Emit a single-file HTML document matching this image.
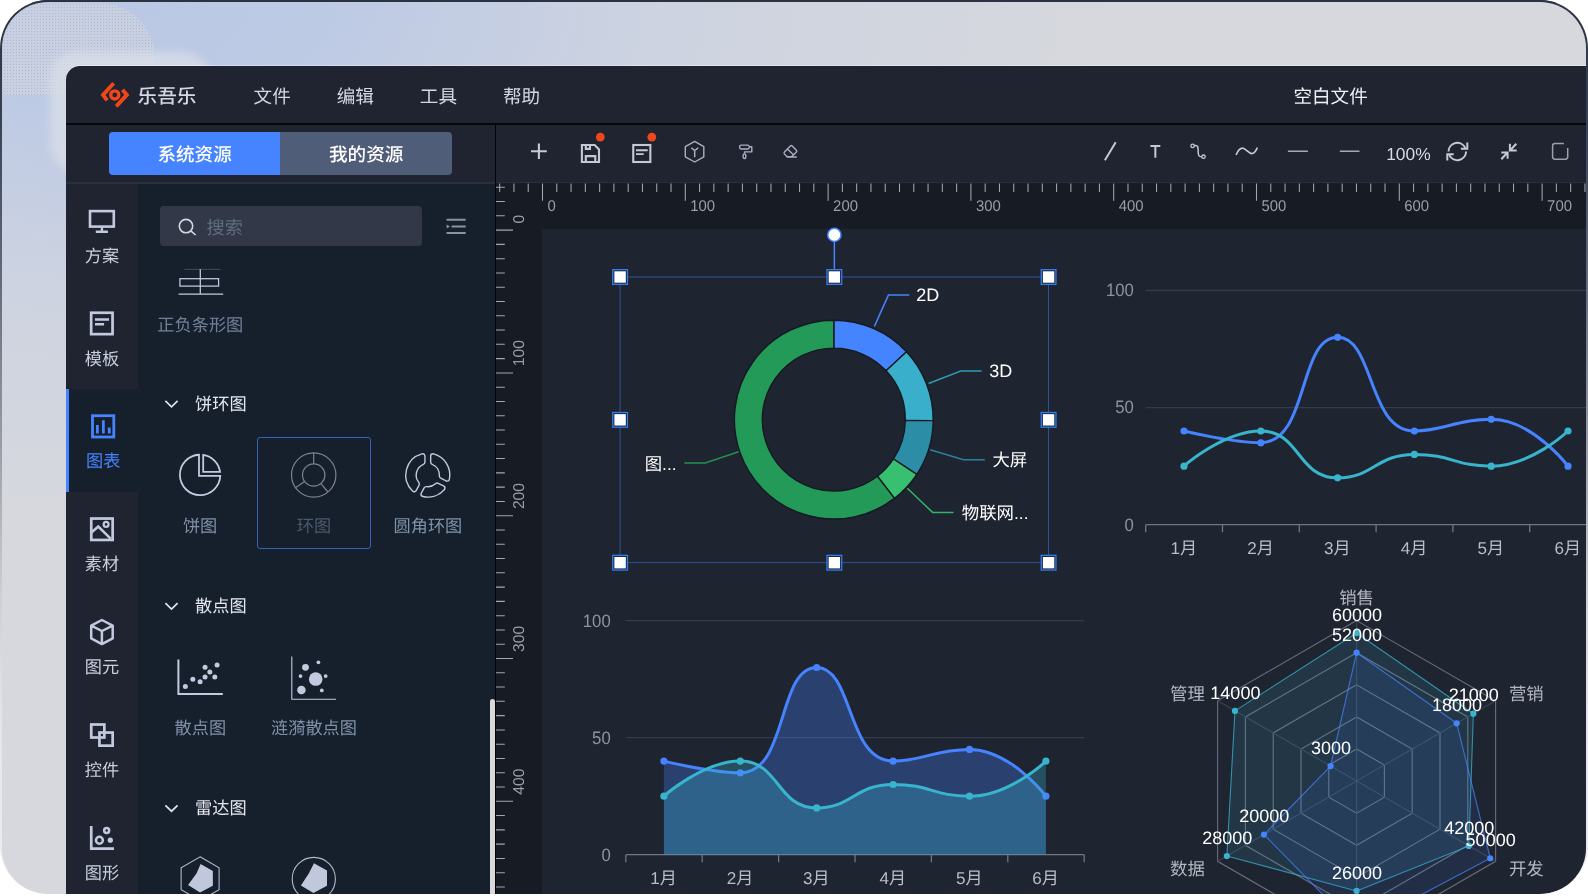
<!DOCTYPE html>
<html lang="zh-CN"><head><meta charset="utf-8"><title>乐吾乐 - 空白文件</title>
<style>
html,body{margin:0;padding:0;}
body{width:1588px;height:896px;overflow:hidden;background:#fff;font-family:"Liberation Sans","Noto Sans CJK SC",sans-serif;text-rendering:geometricPrecision;}
svg text{text-rendering:geometricPrecision;}
#edge{position:absolute;left:0;top:0;width:1588px;height:894px;border-radius:48px;overflow:hidden;
 background:linear-gradient(180deg,#2b3242 0px,#3a4152 120px,#6b7080 300px,#9a9eaa 450px,#cdd0d7 600px,#e4e5e9 720px,#ededef 894px);}
#edge:before{content:"";position:absolute;left:0;top:0;right:0;height:3px;background:#2b3242;}
#frame{position:absolute;left:2px;top:2px;width:1584px;height:892px;border-radius:46px 46px 46px 46px;overflow:hidden;
 background:
  radial-gradient(ellipse 980px 520px at 120px 0px,rgba(186,200,229,1) 0%,rgba(187,201,229,.9) 22%,rgba(196,206,228,.5) 55%,rgba(214,216,221,0) 100%),
  #d6d8dd;}
#in{position:absolute;left:-2px;top:-2px;width:1588px;height:896px;will-change:transform;}
.halft{position:absolute;background-image:radial-gradient(circle,rgba(150,150,150,.55) 0.6px,rgba(150,150,150,0) 0.9px);background-size:3px 3px;}
.b{position:absolute;}
.t{position:absolute;white-space:nowrap;}
svg{position:absolute;left:0;top:0;}
</style></head>
<body>
<div id="edge"><div id="frame"><div id="in">
<div class="b" style="left:3px;top:3px;width:152px;height:92px;border-radius:44px 70px 46px 0;background:rgba(216,218,224,.42);"></div>
<div class="halft" style="left:3px;top:3px;width:152px;height:92px;border-radius:44px 70px 46px 0;opacity:.75"></div>
<div class="b" style="left:50px;top:52px;width:168px;height:124px;border-radius:26px 40px 0 34px;background:rgba(220,223,232,.7);filter:blur(4px);"></div>
<div class="b" style="left:66px;top:66px;width:1530px;height:840px;background:#1f2430;border-top-left-radius:14px;box-shadow:0 -1px 0 rgba(255,255,255,.35);"></div>
<div class="b" style="left:66px;top:123px;width:1530px;height:2px;background:#05070b;"></div>
<div class="b" style="left:66px;top:183.6px;width:71.6px;height:720px;background:#1f2430;"></div>
<div class="b" style="left:137.6px;top:183.6px;width:357.4px;height:720px;background:#161f2c;"></div>
<div class="b" style="left:66px;top:388.5px;width:71.6px;height:103.6px;background:#161f2c;"></div>
<div class="b" style="left:66px;top:388.5px;width:3px;height:103.6px;background:#4583ff;"></div>
<div class="b" style="left:66px;top:182px;width:429px;height:1.8px;background:#2a303d;"></div>
<div class="b" style="left:496px;top:182px;width:1100px;height:1.5px;background:#2a303d;"></div>
<div class="b" style="left:496px;top:183px;width:1100px;height:720px;background:#171b24;"></div>
<div class="b" style="left:542px;top:229px;width:1060px;height:680px;background:#1f2431;"></div>
<div class="b" style="left:494.6px;top:125px;width:1.5px;height:780px;background:#020305;"></div>
<div class="b" style="left:490.2px;top:699px;width:4.4px;height:210px;background:#d9d9db;border-radius:2.5px;"></div>
<div class="t" style="top:83.5px;height:27px;line-height:27px;font-size:19.6px;color:#d3d8e6;font-weight:500;left:137.6px;">乐吾乐</div>
<div class="t" style="top:83.7px;height:26px;line-height:26px;font-size:18.6px;color:#d3d8e4;left:253.6px;">文件</div>
<div class="t" style="top:83.7px;height:26px;line-height:26px;font-size:18.6px;color:#d3d8e4;left:336.7px;">编辑</div>
<div class="t" style="top:83.7px;height:26px;line-height:26px;font-size:18.6px;color:#d3d8e4;left:419.8px;">工具</div>
<div class="t" style="top:83.7px;height:26px;line-height:26px;font-size:18.6px;color:#d3d8e4;left:502.9px;">帮助</div>
<div class="t" style="top:83.7px;height:26px;line-height:26px;font-size:18.6px;color:#eef0f6;left:1293.4px;">空白文件</div>
<div class="b" style="left:108.8px;top:132px;width:171.6px;height:43px;background:#4583ff;border-radius:4px 0 0 4px;"></div>
<div class="b" style="left:280.4px;top:132px;width:171.6px;height:43px;background:#505d79;border-radius:0 4px 4px 0;"></div>
<div class="t" style="top:142.2px;height:26px;line-height:26px;font-size:18.6px;color:#ffffff;font-weight:500;left:194.6px;width:300px;margin-left:-150px;text-align:center;">系统资源</div>
<div class="t" style="top:142.2px;height:26px;line-height:26px;font-size:18.6px;color:#ffffff;font-weight:500;left:366.2px;width:300px;margin-left:-150px;text-align:center;">我的资源</div>
<div class="t" style="top:243.6px;height:24px;line-height:24px;font-size:17.2px;color:#c9cfdf;left:101.9px;width:300px;margin-left:-150px;text-align:center;">方案</div>
<div class="t" style="top:346.5px;height:24px;line-height:24px;font-size:17.2px;color:#c9cfdf;left:101.9px;width:300px;margin-left:-150px;text-align:center;">模板</div>
<div class="t" style="top:449.4px;height:24px;line-height:24px;font-size:17.2px;color:#4583ff;left:103.2px;width:300px;margin-left:-150px;text-align:center;">图表</div>
<div class="t" style="top:552.3px;height:24px;line-height:24px;font-size:17.2px;color:#c9cfdf;left:101.9px;width:300px;margin-left:-150px;text-align:center;">素材</div>
<div class="t" style="top:655.2px;height:24px;line-height:24px;font-size:17.2px;color:#c9cfdf;left:101.9px;width:300px;margin-left:-150px;text-align:center;">图元</div>
<div class="t" style="top:758.1px;height:24px;line-height:24px;font-size:17.2px;color:#c9cfdf;left:101.9px;width:300px;margin-left:-150px;text-align:center;">控件</div>
<div class="t" style="top:861px;height:24px;line-height:24px;font-size:17.2px;color:#c9cfdf;left:101.9px;width:300px;margin-left:-150px;text-align:center;">图形</div>
<div class="b" style="left:160.4px;top:206.4px;width:261.5px;height:39.6px;background:#323847;border-radius:4px;"></div>
<div class="t" style="top:215.9px;height:25px;line-height:25px;font-size:18.2px;color:#5f6c80;left:206.5px;">搜索</div>
<div class="t" style="top:312.6px;height:24px;line-height:24px;font-size:17.2px;color:#6f8198;left:200.3px;width:300px;margin-left:-150px;text-align:center;">正负条形图</div>
<div class="t" style="top:392px;height:24px;line-height:24px;font-size:17.2px;color:#e2e6ee;left:195px;">饼环图</div>
<div class="t" style="top:594.2px;height:24px;line-height:24px;font-size:17.2px;color:#e2e6ee;left:195px;">散点图</div>
<div class="t" style="top:796.4px;height:24px;line-height:24px;font-size:17.2px;color:#e2e6ee;left:195px;">雷达图</div>
<div class="t" style="top:514px;height:24px;line-height:24px;font-size:17.2px;color:#7f91a8;left:200.1px;width:300px;margin-left:-150px;text-align:center;">饼图</div>
<div class="t" style="top:514px;height:24px;line-height:24px;font-size:17.2px;color:#4b596c;left:313.9px;width:300px;margin-left:-150px;text-align:center;">环图</div>
<div class="t" style="top:514px;height:24px;line-height:24px;font-size:17.2px;color:#7f91a8;left:427.9px;width:300px;margin-left:-150px;text-align:center;">圆角环图</div>
<div class="t" style="top:716.4px;height:24px;line-height:24px;font-size:17.2px;color:#7f91a8;left:200.3px;width:300px;margin-left:-150px;text-align:center;">散点图</div>
<div class="t" style="top:716.4px;height:24px;line-height:24px;font-size:17.2px;color:#7f91a8;left:314px;width:300px;margin-left:-150px;text-align:center;">涟漪散点图</div>
<div class="b" style="left:257.2px;top:436.7px;width:113.8px;height:112.6px;box-sizing:border-box;border:1.3px solid #3862b4;border-radius:3px;"></div>
<div class="t" style="top:141.6px;height:24px;line-height:24px;font-size:17.4px;color:#d6dae4;left:1386.2px;">100%</div>
<svg width="1588" height="896" viewBox="0 0 1588 896">
<g fill="none" stroke="#f0471a" stroke-width="3.9" stroke-linejoin="miter"><path d="M113.66 83.2 L103.06 94.9 L107.1 100.4"/><path d="M122.57 89.8 L126.81 94.9 L116.2 106.35"/><circle cx="114.75" cy="94.9" r="4.05" stroke-width="3.4"/></g>
<path d="M165.4 400.9 L171.5 406.8 L177.6 400.9" fill="none" stroke="#dfe3ec" stroke-width="1.7"/>
<path d="M165.4 603.1 L171.5 609 L177.6 603.1" fill="none" stroke="#dfe3ec" stroke-width="1.7"/>
<path d="M165.4 805.3 L171.5 811.2 L177.6 805.3" fill="none" stroke="#dfe3ec" stroke-width="1.7"/>
<g fill="none" stroke="#c3cadf" stroke-width="2.6"><rect x="90" y="211.1" width="23.8" height="15.5"/><path d="M101.9 227 V231.6 M95.8 231.7 H107.9" stroke-width="2.4"/><rect x="91.15" y="312.75" width="21.4" height="21.4" stroke-width="2.7"/><path d="M95 319.4 H109 M95 324.2 H104.1" stroke-width="2.5"/><rect x="91.25" y="518.55" width="21.4" height="21.4" stroke-width="2.7"/><path d="M91.4 532.6 L98.3 526.6 L110.6 538.6" stroke-width="2.6"/><circle cx="106.1" cy="524.4" r="2.45" stroke-width="2.2"/><path d="M101.9 620 L112.7 625.6 V638.3 L101.9 644.1 L91.2 638.3 V625.6 Z M91.2 625.6 L101.9 631 L112.7 625.6 M101.9 631 V644.1" stroke-width="2.5" stroke-linejoin="round"/><rect x="91.25" y="724.5" width="13.1" height="13" stroke-width="2.7"/><rect x="99.45" y="732.55" width="13.2" height="13.1" stroke-width="2.7"/><path d="M91.25 825.9 V848.65 H114" stroke-width="2.7"/><circle cx="106.65" cy="830.6" r="2.5" stroke-width="2.5"/><circle cx="99.4" cy="840.2" r="3.45" stroke-width="2.5"/><circle cx="110.3" cy="840.2" r="2.6" fill="#c3cadf" stroke="none"/></g>
<g fill="none" stroke="#4583ff" stroke-width="2.8"><rect x="92.5" y="415.7" width="21.3" height="21.3"/><path d="M97.4 425.1 V433.6 M103.35 420.2 V433.6 M109.25 427.5 V433.6" stroke-width="2.8"/></g>
<g fill="none" stroke="#c4c9d7" stroke-width="2"><path d="M531 151.3 H546.8 M538.9 143.5 V159.1" stroke-width="2.1"/><path d="M581.9 145 H594.6 L599 149.4 V162 H581.9 Z M585.8 145 V148.9 H590 V145 M585.8 162 V156.1 H595.3 V162" stroke-width="2.1"/><rect x="633.25" y="145" width="17.1" height="17" stroke-width="2.1"/><path d="M636 150.2 H647.7 M636 154.1 H643.7" stroke-width="1.9"/></g><circle cx="600.3" cy="137.1" r="4.4" fill="#f0471a"/><circle cx="651.8" cy="137.1" r="4.4" fill="#f0471a"/><g fill="none" stroke="#a9afbf" stroke-width="1.4" stroke-linejoin="round"><path d="M694.7 141.3 L703.8 146.6 V156.8 L694.7 162 L685.3 156.8 V146.6 Z"/><path d="M691.4 147.8 L694.7 150.5 L698.2 147.8 M694.7 150.5 V157.3" stroke-width="1.5"/><rect x="739.5" y="145.1" width="9.8" height="3.9" rx="1.9" stroke-width="1.3"/><path d="M749.5 146.8 H751.8 V151.9 H744.5 V153.6" stroke-width="1.4"/><ellipse cx="744.5" cy="156.2" rx="1.4" ry="2.3" stroke-width="1.4"/><path d="M790.4 145.9 Q791.3 145 792.2 145.9 L796.4 150.2 Q797.3 151.1 796.4 152 L791.6 156.8 H787 L784.4 153.9 Q783.6 153 784.4 152.1 Z M787.4 148.9 L793.7 155 M787 157 H796.8" stroke-width="1.4"/></g><g fill="none" stroke="#c4c9d7" stroke-width="1.7"><path d="M1104.9 160.2 L1115.7 142.2" stroke-width="2"/><path d="M1150.4 146 H1160.3 M1155.35 146 V157.8" stroke-width="2"/><circle cx="1192.6" cy="145.9" r="1.7" stroke-width="1.3"/><circle cx="1203.5" cy="156.7" r="1.7" stroke-width="1.3"/><path d="M1194.4 145.6 C1198.2 144.6 1198.2 148 1198.2 151.5 S1198.6 156.9 1201.8 156.8" stroke-width="1.5"/><path d="M1236.1 155 C1238 150.6 1240 148.2 1242.4 148.2 C1245.6 148.2 1248.6 153.6 1251.8 153.6 C1254 153.6 1256 150.6 1257.4 147.6" stroke-width="1.7"/><path d="M1287.9 151.2 H1307.9 M1339.8 151.2 H1359.5" stroke="#a4a9b8" stroke-width="1.5"/><path d="M1448.5 151.5 A8.8 8.8 0 0 1 1465.3 148 M1466.1 151.5 A8.8 8.8 0 0 1 1449.3 155" stroke-width="2"/><path d="M1467.3 142.4 V148.8 H1460.9 M1447.3 160.6 V154.2 H1453.7" stroke-width="2"/><path d="M1516.3 143.8 L1510 150.5 M1509.9 143.8 V150.6 H1516.7 M1501.3 159.2 L1507.5 152.5 M1501.3 152.4 H1507.6 V158.8" stroke-width="2"/><path d="M1563.9 143.4 H1555 Q1552.6 143.4 1552.6 145.8 V156.8 Q1552.6 159.2 1555 159.2 H1565.3 Q1567.7 159.2 1567.7 156.8 V147.9" stroke="#9aa0b0" stroke-width="1.5"/></g>
<g fill="none" stroke="#d3d7df" stroke-width="1.6"><circle cx="186" cy="226.1" r="6.7"/><path d="M190.8 230.9 L195.6 235"/></g><g stroke="#8b919f" stroke-width="2" fill="#8b919f"><path d="M446.5 219.8 H465.7 M451.6 226.5 H465.7 M446.5 233.1 H465.7"/><path d="M446.6 224.4 V228.6 L449.9 226.5 Z" stroke="none"/></g><g fill="none" stroke="#c3cadf" stroke-width="1.25"><path d="M184.5 269.3 H220.5" stroke-width="0.5" stroke-opacity=".55"/><rect x="179.9" y="278.7" width="38.7" height="7.4"/><path d="M200.3 269.3 V294 M178.6 294 H223.2"/></g><g fill="none" stroke="#c3cadf" stroke-width="1.8" stroke-linejoin="miter"><path d="M199 475.8 V454.73 A20.2 20.2 0 1 0 220.28 475.8 Z"/><path d="M203.2 471.9 V454.94 A20.2 20.2 0 0 1 220.08 471.9 Z"/></g><g fill="none" stroke="#7d828d" stroke-width="1.2"><circle cx="313.7" cy="475" r="22.2"/><circle cx="313.7" cy="475" r="11.2"/><path d="M313.7 463.8 L313.7 452.8"/><path d="M320.9 483.58 L327.97 492.01"/><path d="M304.53 481.42 L295.51 487.73"/></g><path d="M433.05 456.22 A19.6 19.6 0 0 1 447.07 478.66 L441.77 476.07 A14 14 0 0 0 433.05 462.12 Z" fill="#c3cadf" stroke="#c3cadf" stroke-width="6.2" stroke-linejoin="round"/><path d="M433.05 456.22 A19.6 19.6 0 0 1 447.07 478.66 L441.77 476.07 A14 14 0 0 0 433.05 462.12 Z" fill="#161f2c" stroke="#161f2c" stroke-width="3.4" stroke-linejoin="round"/><path d="M442.47 488.1 A19.6 19.6 0 0 1 423.4 494.2 L426.22 489.01 A14 14 0 0 0 437.16 485.51 Z" fill="#c3cadf" stroke="#c3cadf" stroke-width="6.2" stroke-linejoin="round"/><path d="M442.47 488.1 A19.6 19.6 0 0 1 423.4 494.2 L426.22 489.01 A14 14 0 0 0 437.16 485.51 Z" fill="#161f2c" stroke="#161f2c" stroke-width="3.4" stroke-linejoin="round"/><path d="M414.18 489.19 A19.6 19.6 0 0 1 422.55 456.22 L422.55 462.12 A14 14 0 0 0 416.99 484 Z" fill="#c3cadf" stroke="#c3cadf" stroke-width="6.2" stroke-linejoin="round"/><path d="M414.18 489.19 A19.6 19.6 0 0 1 422.55 456.22 L422.55 462.12 A14 14 0 0 0 416.99 484 Z" fill="#161f2c" stroke="#161f2c" stroke-width="3.4" stroke-linejoin="round"/><g fill="#c3cadf" stroke="none"><circle cx="185.34" cy="686.55" r="2.5"/><circle cx="192.82" cy="679.3" r="2.5"/><circle cx="200.08" cy="681.79" r="2.5"/><circle cx="205.06" cy="677.03" r="2.5"/><circle cx="205.06" cy="667.28" r="2.5"/><circle cx="209.83" cy="672.04" r="2.5"/><circle cx="214.81" cy="677.03" r="2.5"/><circle cx="217.08" cy="665.01" r="2.5"/></g><path d="M178.4 659.4 V694 H222.8" fill="none" stroke="#c3cadf" stroke-width="2"/><path d="M291.8 656.4 V699.2 H336.1" fill="none" stroke="#c3cadf" stroke-width="1.1"/><g fill="#c3cadf" stroke="none"><circle cx="315.7" cy="679.07" r="6.8"/><circle cx="305.5" cy="667.28" r="3.4"/><circle cx="301.41" cy="689.95" r="4.3"/><circle cx="318.42" cy="662.29" r="1.9"/><circle cx="300.51" cy="676.12" r="1.9"/><circle cx="325.67" cy="676.12" r="1.9"/><circle cx="321.82" cy="690.41" r="1.9"/></g><polygon points="200.1,856.8 219.07,867.75 219.07,889.65 200.1,900.6 181.13,889.65 181.13,867.75" fill="none" stroke="#b3b9cb" stroke-width="1.1"/><polygon points="200.6,864.1 212.85,870.9 212.85,885.7 200.04,892.5 188.1,885.1 196.6,873.2" fill="#c1c8dc"/><circle cx="313.8" cy="879" r="21.6" fill="none" stroke="#b3b9cb" stroke-width="1.1"/><polygon points="313.96,863.2 327,870.4 327,885.7 313.4,893 300.9,885.4 308.9,873.2" fill="#c1c8dc"/>
<g stroke="#a2a7b4" stroke-width="1.05" fill="none"><path d="M499.66 183.4 V191.9 M513.94 183.4 V191.9 M528.22 183.4 V191.9 M542.5 183.4 V200.7 M556.78 183.4 V191.9 M571.06 183.4 V191.9 M585.34 183.4 V191.9 M599.62 183.4 V191.9 M613.9 183.4 V191.9 M628.18 183.4 V191.9 M642.46 183.4 V191.9 M656.74 183.4 V191.9 M671.02 183.4 V191.9 M685.3 183.4 V200.7 M699.58 183.4 V191.9 M713.86 183.4 V191.9 M728.14 183.4 V191.9 M742.42 183.4 V191.9 M756.7 183.4 V191.9 M770.98 183.4 V191.9 M785.26 183.4 V191.9 M799.54 183.4 V191.9 M813.82 183.4 V191.9 M828.1 183.4 V200.7 M842.38 183.4 V191.9 M856.66 183.4 V191.9 M870.94 183.4 V191.9 M885.22 183.4 V191.9 M899.5 183.4 V191.9 M913.78 183.4 V191.9 M928.06 183.4 V191.9 M942.34 183.4 V191.9 M956.62 183.4 V191.9 M970.9 183.4 V200.7 M985.18 183.4 V191.9 M999.46 183.4 V191.9 M1013.74 183.4 V191.9 M1028.02 183.4 V191.9 M1042.3 183.4 V191.9 M1056.58 183.4 V191.9 M1070.86 183.4 V191.9 M1085.14 183.4 V191.9 M1099.42 183.4 V191.9 M1113.7 183.4 V200.7 M1127.98 183.4 V191.9 M1142.26 183.4 V191.9 M1156.54 183.4 V191.9 M1170.82 183.4 V191.9 M1185.1 183.4 V191.9 M1199.38 183.4 V191.9 M1213.66 183.4 V191.9 M1227.94 183.4 V191.9 M1242.22 183.4 V191.9 M1256.5 183.4 V200.7 M1270.78 183.4 V191.9 M1285.06 183.4 V191.9 M1299.34 183.4 V191.9 M1313.62 183.4 V191.9 M1327.9 183.4 V191.9 M1342.18 183.4 V191.9 M1356.46 183.4 V191.9 M1370.74 183.4 V191.9 M1385.02 183.4 V191.9 M1399.3 183.4 V200.7 M1413.58 183.4 V191.9 M1427.86 183.4 V191.9 M1442.14 183.4 V191.9 M1456.42 183.4 V191.9 M1470.7 183.4 V191.9 M1484.98 183.4 V191.9 M1499.26 183.4 V191.9 M1513.54 183.4 V191.9 M1527.82 183.4 V191.9 M1542.1 183.4 V200.7 M1556.38 183.4 V191.9 M1570.66 183.4 V191.9 M1584.94 183.4 V191.9 M496 187.26 H504.8 M496 201.54 H504.8 M496 215.82 H504.8 M496 230.1 H513 M496 244.38 H504.8 M496 258.66 H504.8 M496 272.94 H504.8 M496 287.22 H504.8 M496 301.5 H504.8 M496 315.78 H504.8 M496 330.06 H504.8 M496 344.34 H504.8 M496 358.62 H504.8 M496 372.9 H513 M496 387.18 H504.8 M496 401.46 H504.8 M496 415.74 H504.8 M496 430.02 H504.8 M496 444.3 H504.8 M496 458.58 H504.8 M496 472.86 H504.8 M496 487.14 H504.8 M496 501.42 H504.8 M496 515.7 H513 M496 529.98 H504.8 M496 544.26 H504.8 M496 558.54 H504.8 M496 572.82 H504.8 M496 587.1 H504.8 M496 601.38 H504.8 M496 615.66 H504.8 M496 629.94 H504.8 M496 644.22 H504.8 M496 658.5 H513 M496 672.78 H504.8 M496 687.06 H504.8 M496 701.34 H504.8 M496 715.62 H504.8 M496 729.9 H504.8 M496 744.18 H504.8 M496 758.46 H504.8 M496 772.74 H504.8 M496 787.02 H504.8 M496 801.3 H513 M496 815.58 H504.8 M496 829.86 H504.8 M496 844.14 H504.8 M496 858.42 H504.8 M496 872.7 H504.8 M496 886.98 H504.8 "/></g><g font-family="Liberation Sans,Noto Sans CJK SC,sans-serif" font-size="15.5" fill="#9a9ea9"><text transform="translate(547.5 211.3) scale(.96 1)">0</text><text transform="translate(690.3 211.3) scale(.96 1)">100</text><text transform="translate(833.1 211.3) scale(.96 1)">200</text><text transform="translate(975.9 211.3) scale(.96 1)">300</text><text transform="translate(1118.7 211.3) scale(.96 1)">400</text><text transform="translate(1261.5 211.3) scale(.96 1)">500</text><text transform="translate(1404.3 211.3) scale(.96 1)">600</text><text transform="translate(1547.1 211.3) scale(.96 1)">700</text><text font-size="15.7" transform="translate(523.5 223.5) rotate(-90)">0</text><text font-size="15.7" transform="translate(523.5 366.3) rotate(-90)">100</text><text font-size="15.7" transform="translate(523.5 509.1) rotate(-90)">200</text><text font-size="15.7" transform="translate(523.5 651.9) rotate(-90)">300</text><text font-size="15.7" transform="translate(523.5 794.7) rotate(-90)">400</text></g>
<path d="M833.8 320.2 A99.4 99.4 0 0 1 906.5 351.81 L886.09 370.84 A71.5 71.5 0 0 0 833.8 348.1 Z" fill="#4584ff" stroke="#151922" stroke-width="1.4" stroke-linejoin="round"/><path d="M906.5 351.81 A99.4 99.4 0 0 1 933.19 420.64 L905.3 420.35 A71.5 71.5 0 0 0 886.09 370.84 Z" fill="#39afcb" stroke="#151922" stroke-width="1.4" stroke-linejoin="round"/><path d="M933.19 420.64 A99.4 99.4 0 0 1 916.78 474.32 L893.49 458.96 A71.5 71.5 0 0 0 905.3 420.35 Z" fill="#2b8da6" stroke="#151922" stroke-width="1.4" stroke-linejoin="round"/><path d="M916.78 474.32 A99.4 99.4 0 0 1 894.45 498.35 L877.43 476.25 A71.5 71.5 0 0 0 893.49 458.96 Z" fill="#36c070" stroke="#151922" stroke-width="1.4" stroke-linejoin="round"/><path d="M894.45 498.35 A99.4 99.4 0 1 1 833.8 320.2 L833.8 348.1 A71.5 71.5 0 1 0 877.43 476.25 Z" fill="#249a58" stroke="#151922" stroke-width="1.4" stroke-linejoin="round"/><polyline points="874.4,326.4 888.4,295.1 909.3,295.1" fill="none" stroke="#4584ff" stroke-width="1.5"/><polyline points="928.6,383.5 960.7,371 981.6,371" fill="none" stroke="#2f9bb5" stroke-width="1.5"/><polyline points="930.2,449.8 963.5,459.8 984.8,459.8" fill="none" stroke="#2a839a" stroke-width="1.5"/><polyline points="907.3,488.3 932.6,512.4 953.5,512.4" fill="none" stroke="#33b367" stroke-width="1.5"/><polyline points="738.6,451.8 705.3,463 684.4,463" fill="none" stroke="#23914f" stroke-width="1.5"/><g font-family="Liberation Sans,Noto Sans CJK SC,sans-serif"><text x="916.3" y="295.4" font-size="18" fill="#ffffff" text-anchor="start" dominant-baseline="central" >2D</text><text x="989.3" y="371.2" font-size="18" fill="#ffffff" text-anchor="start" dominant-baseline="central" >3D</text><text x="992.4" y="460" font-size="17.4" fill="#ffffff" text-anchor="start" dominant-baseline="central" >大屏</text><text x="961.8" y="512.6" font-size="17.4" fill="#ffffff" text-anchor="start" dominant-baseline="central" >物联网...</text><text x="676.6" y="463.6" font-size="17.4" fill="#ffffff" text-anchor="end" dominant-baseline="central" >图...</text></g><rect x="620.1" y="277" width="428.5" height="285.7" fill="none" stroke="#2f5fb2" stroke-width="0.8"/><path d="M834.35 277 V241" stroke="#4583ff" stroke-width="1.5"/><circle cx="834.35" cy="234.9" r="6.6" fill="#fff" stroke="#4583ff" stroke-width="1.5"/><rect x="612.75" y="269.65" width="14.7" height="14.7" fill="#1f2431" stroke="#2f7ef2" stroke-width="1.3"/><rect x="614.4" y="271.3" width="11.4" height="11.4" fill="#fff"/><rect x="827" y="269.65" width="14.7" height="14.7" fill="#1f2431" stroke="#2f7ef2" stroke-width="1.3"/><rect x="828.65" y="271.3" width="11.4" height="11.4" fill="#fff"/><rect x="1041.25" y="269.65" width="14.7" height="14.7" fill="#1f2431" stroke="#2f7ef2" stroke-width="1.3"/><rect x="1042.9" y="271.3" width="11.4" height="11.4" fill="#fff"/><rect x="612.75" y="412.5" width="14.7" height="14.7" fill="#1f2431" stroke="#2f7ef2" stroke-width="1.3"/><rect x="614.4" y="414.15" width="11.4" height="11.4" fill="#fff"/><rect x="1041.25" y="412.5" width="14.7" height="14.7" fill="#1f2431" stroke="#2f7ef2" stroke-width="1.3"/><rect x="1042.9" y="414.15" width="11.4" height="11.4" fill="#fff"/><rect x="612.75" y="555.35" width="14.7" height="14.7" fill="#1f2431" stroke="#2f7ef2" stroke-width="1.3"/><rect x="614.4" y="557" width="11.4" height="11.4" fill="#fff"/><rect x="827" y="555.35" width="14.7" height="14.7" fill="#1f2431" stroke="#2f7ef2" stroke-width="1.3"/><rect x="828.65" y="557" width="11.4" height="11.4" fill="#fff"/><rect x="1041.25" y="555.35" width="14.7" height="14.7" fill="#1f2431" stroke="#2f7ef2" stroke-width="1.3"/><rect x="1042.9" y="557" width="11.4" height="11.4" fill="#fff"/>
<path d="M1145.7 407.6 H1606.5" stroke="#353b4a" stroke-width="1.3" fill="none"/><path d="M1145.7 290.5 H1606.5" stroke="#353b4a" stroke-width="1.3" fill="none"/><path d="M1145.7 524.7 H1606.5 M1145.7 524.7 v7.6 M1222.5 524.7 v7.6 M1299.3 524.7 v7.6 M1376.1 524.7 v7.6 M1452.9 524.7 v7.6 M1529.7 524.7 v7.6 M1606.5 524.7 v7.6 " stroke="#70757f" stroke-width="1.3" fill="none"/><g font-family="Liberation Sans,Noto Sans CJK SC,sans-serif"><text transform="translate(1133.9 524.5) scale(.93 1)" font-size="18" fill="#8e939f" text-anchor="end" dominant-baseline="central">0</text><text transform="translate(1133.9 407.4) scale(.93 1)" font-size="18" fill="#8e939f" text-anchor="end" dominant-baseline="central">50</text><text transform="translate(1133.9 290.3) scale(.93 1)" font-size="18" fill="#8e939f" text-anchor="end" dominant-baseline="central">100</text><text x="1183.7" y="548.2" font-size="17.1" fill="#b9bdc6" text-anchor="middle" dominant-baseline="central" >1月</text><text x="1260.5" y="548.2" font-size="17.1" fill="#b9bdc6" text-anchor="middle" dominant-baseline="central" >2月</text><text x="1337.3" y="548.2" font-size="17.1" fill="#b9bdc6" text-anchor="middle" dominant-baseline="central" >3月</text><text x="1414.1" y="548.2" font-size="17.1" fill="#b9bdc6" text-anchor="middle" dominant-baseline="central" >4月</text><text x="1490.9" y="548.2" font-size="17.1" fill="#b9bdc6" text-anchor="middle" dominant-baseline="central" >5月</text><text x="1567.7" y="548.2" font-size="17.1" fill="#b9bdc6" text-anchor="middle" dominant-baseline="central" >6月</text></g><path d="M1184 431.02 C1184 431.02 1232.13 442.73 1260.8 442.73 C1308.93 442.73 1297.79 337.34 1337.6 337.34 C1374.59 337.34 1367.61 431.02 1414.4 431.02 C1444.41 431.02 1455.61 419.31 1491.2 419.31 C1532.41 419.31 1568 466.15 1568 466.15" fill="none" stroke="#4583ff" stroke-width="3" stroke-linejoin="round"/><circle cx="1184" cy="431.02" r="3.6" fill="#4583ff"/><circle cx="1260.8" cy="442.73" r="3.6" fill="#4583ff"/><circle cx="1337.6" cy="337.34" r="3.6" fill="#4583ff"/><circle cx="1414.4" cy="431.02" r="3.6" fill="#4583ff"/><circle cx="1491.2" cy="419.31" r="3.6" fill="#4583ff"/><circle cx="1568" cy="466.15" r="3.6" fill="#4583ff"/><path d="M1184 466.15 C1184 466.15 1223.61 431.02 1260.8 431.02 C1300.41 431.02 1297.02 477.86 1337.6 477.86 C1373.82 477.86 1375.37 454.44 1414.4 454.44 C1452.17 454.44 1454.4 466.15 1491.2 466.15 C1531.2 466.15 1568 431.02 1568 431.02" fill="none" stroke="#38b4cd" stroke-width="3" stroke-linejoin="round"/><circle cx="1184" cy="466.15" r="3.6" fill="#38b4cd"/><circle cx="1260.8" cy="431.02" r="3.6" fill="#38b4cd"/><circle cx="1337.6" cy="477.86" r="3.6" fill="#38b4cd"/><circle cx="1414.4" cy="454.44" r="3.6" fill="#38b4cd"/><circle cx="1491.2" cy="466.15" r="3.6" fill="#38b4cd"/><circle cx="1568" cy="431.02" r="3.6" fill="#38b4cd"/>
<path d="M625.8 737.7 H1084.2" stroke="#353b4a" stroke-width="1.3" fill="none"/><path d="M625.8 620.7 H1084.2" stroke="#353b4a" stroke-width="1.3" fill="none"/><path d="M625.8 854.7 H1084.2 M625.8 854.7 v7.6 M702.2 854.7 v7.6 M778.6 854.7 v7.6 M855 854.7 v7.6 M931.4 854.7 v7.6 M1007.8 854.7 v7.6 M1084.2 854.7 v7.6 " stroke="#70757f" stroke-width="1.3" fill="none"/><g font-family="Liberation Sans,Noto Sans CJK SC,sans-serif"><text transform="translate(610.7 854.5) scale(.93 1)" font-size="18" fill="#8e939f" text-anchor="end" dominant-baseline="central">0</text><text transform="translate(610.7 737.5) scale(.93 1)" font-size="18" fill="#8e939f" text-anchor="end" dominant-baseline="central">50</text><text transform="translate(610.7 620.5) scale(.93 1)" font-size="18" fill="#8e939f" text-anchor="end" dominant-baseline="central">100</text><text x="663.6" y="878.4" font-size="17.1" fill="#b9bdc6" text-anchor="middle" dominant-baseline="central" >1月</text><text x="740" y="878.4" font-size="17.1" fill="#b9bdc6" text-anchor="middle" dominant-baseline="central" >2月</text><text x="816.4" y="878.4" font-size="17.1" fill="#b9bdc6" text-anchor="middle" dominant-baseline="central" >3月</text><text x="892.8" y="878.4" font-size="17.1" fill="#b9bdc6" text-anchor="middle" dominant-baseline="central" >4月</text><text x="969.2" y="878.4" font-size="17.1" fill="#b9bdc6" text-anchor="middle" dominant-baseline="central" >5月</text><text x="1045.6" y="878.4" font-size="17.1" fill="#b9bdc6" text-anchor="middle" dominant-baseline="central" >6月</text></g><path d="M663.9 761.1 C663.9 761.1 711.83 772.8 740.3 772.8 C788.23 772.8 777.09 667.5 816.7 667.5 C853.49 667.5 846.51 761.1 893.1 761.1 C922.91 761.1 934.12 749.4 969.5 749.4 C1010.52 749.4 1045.9 796.2 1045.9 796.2 L1045.9 854.7 L663.9 854.7 Z" fill="#4583ff" fill-opacity=".3" stroke="none"/><path d="M663.9 761.1 C663.9 761.1 711.83 772.8 740.3 772.8 C788.23 772.8 777.09 667.5 816.7 667.5 C853.49 667.5 846.51 761.1 893.1 761.1 C922.91 761.1 934.12 749.4 969.5 749.4 C1010.52 749.4 1045.9 796.2 1045.9 796.2" fill="none" stroke="#4583ff" stroke-width="3" stroke-linejoin="round"/><circle cx="663.9" cy="761.1" r="3.6" fill="#4583ff"/><circle cx="740.3" cy="772.8" r="3.6" fill="#4583ff"/><circle cx="816.7" cy="667.5" r="3.6" fill="#4583ff"/><circle cx="893.1" cy="761.1" r="3.6" fill="#4583ff"/><circle cx="969.5" cy="749.4" r="3.6" fill="#4583ff"/><circle cx="1045.9" cy="796.2" r="3.6" fill="#4583ff"/><path d="M663.9 796.2 C663.9 796.2 703.31 761.1 740.3 761.1 C779.71 761.1 776.32 807.9 816.7 807.9 C852.72 807.9 854.27 784.5 893.1 784.5 C930.67 784.5 932.91 796.2 969.5 796.2 C1009.31 796.2 1045.9 761.1 1045.9 761.1 L1045.9 854.7 L663.9 854.7 Z" fill="#38b4cd" fill-opacity=".3" stroke="none"/><path d="M663.9 796.2 C663.9 796.2 703.31 761.1 740.3 761.1 C779.71 761.1 776.32 807.9 816.7 807.9 C852.72 807.9 854.27 784.5 893.1 784.5 C930.67 784.5 932.91 796.2 969.5 796.2 C1009.31 796.2 1045.9 761.1 1045.9 761.1" fill="none" stroke="#38b4cd" stroke-width="3" stroke-linejoin="round"/><circle cx="663.9" cy="796.2" r="3.6" fill="#38b4cd"/><circle cx="740.3" cy="761.1" r="3.6" fill="#38b4cd"/><circle cx="816.7" cy="807.9" r="3.6" fill="#38b4cd"/><circle cx="893.1" cy="784.5" r="3.6" fill="#38b4cd"/><circle cx="969.5" cy="796.2" r="3.6" fill="#38b4cd"/><circle cx="1045.9" cy="761.1" r="3.6" fill="#38b4cd"/>
<polygon points="1356.6,620.6 1217.6,700.85 1217.6,861.35 1356.6,941.6 1495.6,861.35 1495.6,700.85" fill="none" stroke="#666b7a" stroke-width="1.15"/><polygon points="1356.6,652.7 1245.4,716.9 1245.4,845.3 1356.6,909.5 1467.8,845.3 1467.8,716.9" fill="none" stroke="#666b7a" stroke-width="1.15"/><polygon points="1356.6,684.8 1273.2,732.95 1273.2,829.25 1356.6,877.4 1440,829.25 1440,732.95" fill="none" stroke="#666b7a" stroke-width="1.15"/><polygon points="1356.6,716.9 1301,749 1301,813.2 1356.6,845.3 1412.2,813.2 1412.2,749" fill="none" stroke="#666b7a" stroke-width="1.15"/><polygon points="1356.6,749 1328.8,765.05 1328.8,797.15 1356.6,813.2 1384.4,797.15 1384.4,765.05" fill="none" stroke="#666b7a" stroke-width="1.15"/><path d="M1356.6 781.1 L1356.6 620.6" stroke="#3a4150" stroke-width="1.2"/><path d="M1356.6 781.1 L1217.6 700.85" stroke="#3a4150" stroke-width="1.2"/><path d="M1356.6 781.1 L1217.6 861.35" stroke="#3a4150" stroke-width="1.2"/><path d="M1356.6 781.1 L1356.6 941.6" stroke="#3a4150" stroke-width="1.2"/><path d="M1356.6 781.1 L1495.6 861.35" stroke="#3a4150" stroke-width="1.2"/><path d="M1356.6 781.1 L1495.6 700.85" stroke="#3a4150" stroke-width="1.2"/><polygon points="1356.6,632.95 1234.98,710.88 1226.87,856 1356.6,890.92 1468.87,845.92 1473.36,713.69" fill="#38b4cd" fill-opacity=".13" stroke="#38b4cd" stroke-opacity=".75" stroke-width="1.1" stroke-linejoin="round"/><circle cx="1356.6" cy="632.95" r="3.1" fill="#38b4cd"/><circle cx="1234.98" cy="710.88" r="3.1" fill="#38b4cd"/><circle cx="1226.87" cy="856" r="3.1" fill="#38b4cd"/><circle cx="1356.6" cy="890.92" r="3.1" fill="#38b4cd"/><circle cx="1468.87" cy="845.92" r="3.1" fill="#38b4cd"/><circle cx="1473.36" cy="713.69" r="3.1" fill="#38b4cd"/><polygon points="1356.6,652.7 1330.54,766.05 1263.94,834.6 1356.6,928.93 1490.25,858.26 1456.68,723.32" fill="#4583ff" fill-opacity=".10" stroke="#4583ff" stroke-opacity=".75" stroke-width="1.1" stroke-linejoin="round"/><circle cx="1356.6" cy="652.7" r="3.1" fill="#4583ff"/><circle cx="1330.54" cy="766.05" r="3.1" fill="#4583ff"/><circle cx="1263.94" cy="834.6" r="3.1" fill="#4583ff"/><circle cx="1356.6" cy="928.93" r="3.1" fill="#4583ff"/><circle cx="1490.25" cy="858.26" r="3.1" fill="#4583ff"/><circle cx="1456.68" cy="723.32" r="3.1" fill="#4583ff"/><g font-family="Liberation Sans,Noto Sans CJK SC,sans-serif"><text x="1356.6" y="597.8" font-size="17.4" fill="#b3b7c0" text-anchor="middle" dominant-baseline="central" >销售</text><text x="1204.9" y="693.6" font-size="17.4" fill="#b3b7c0" text-anchor="end" dominant-baseline="central" >管理</text><text x="1204.9" y="869.2" font-size="17.4" fill="#b3b7c0" text-anchor="end" dominant-baseline="central" >数据</text><text x="1508.9" y="693.6" font-size="17.4" fill="#b3b7c0" text-anchor="start" dominant-baseline="central" >营销</text><text x="1508.9" y="869.2" font-size="17.4" fill="#b3b7c0" text-anchor="start" dominant-baseline="central" >开发</text><text x="1357" y="614.75" font-size="18" fill="#ffffff" text-anchor="middle" dominant-baseline="central" >60000</text><text x="1235.38" y="692.68" font-size="18" fill="#ffffff" text-anchor="middle" dominant-baseline="central" >14000</text><text x="1227.27" y="837.8" font-size="18" fill="#ffffff" text-anchor="middle" dominant-baseline="central" >28000</text><text x="1357" y="872.72" font-size="18" fill="#ffffff" text-anchor="middle" dominant-baseline="central" >26000</text><text x="1469.27" y="827.72" font-size="18" fill="#ffffff" text-anchor="middle" dominant-baseline="central" >42000</text><text x="1473.76" y="695.49" font-size="18" fill="#ffffff" text-anchor="middle" dominant-baseline="central" >21000</text><text x="1357" y="634.5" font-size="18" fill="#ffffff" text-anchor="middle" dominant-baseline="central" >52000</text><text x="1330.94" y="747.85" font-size="18" fill="#ffffff" text-anchor="middle" dominant-baseline="central" >3000</text><text x="1264.34" y="816.4" font-size="18" fill="#ffffff" text-anchor="middle" dominant-baseline="central" >20000</text><text x="1357" y="910.73" font-size="18" fill="#ffffff" text-anchor="middle" dominant-baseline="central" >35000</text><text x="1490.65" y="840.06" font-size="18" fill="#ffffff" text-anchor="middle" dominant-baseline="central" >50000</text><text x="1457.08" y="705.12" font-size="18" fill="#ffffff" text-anchor="middle" dominant-baseline="central" >18000</text></g>
</svg>
</div></div></div>
</body></html>
